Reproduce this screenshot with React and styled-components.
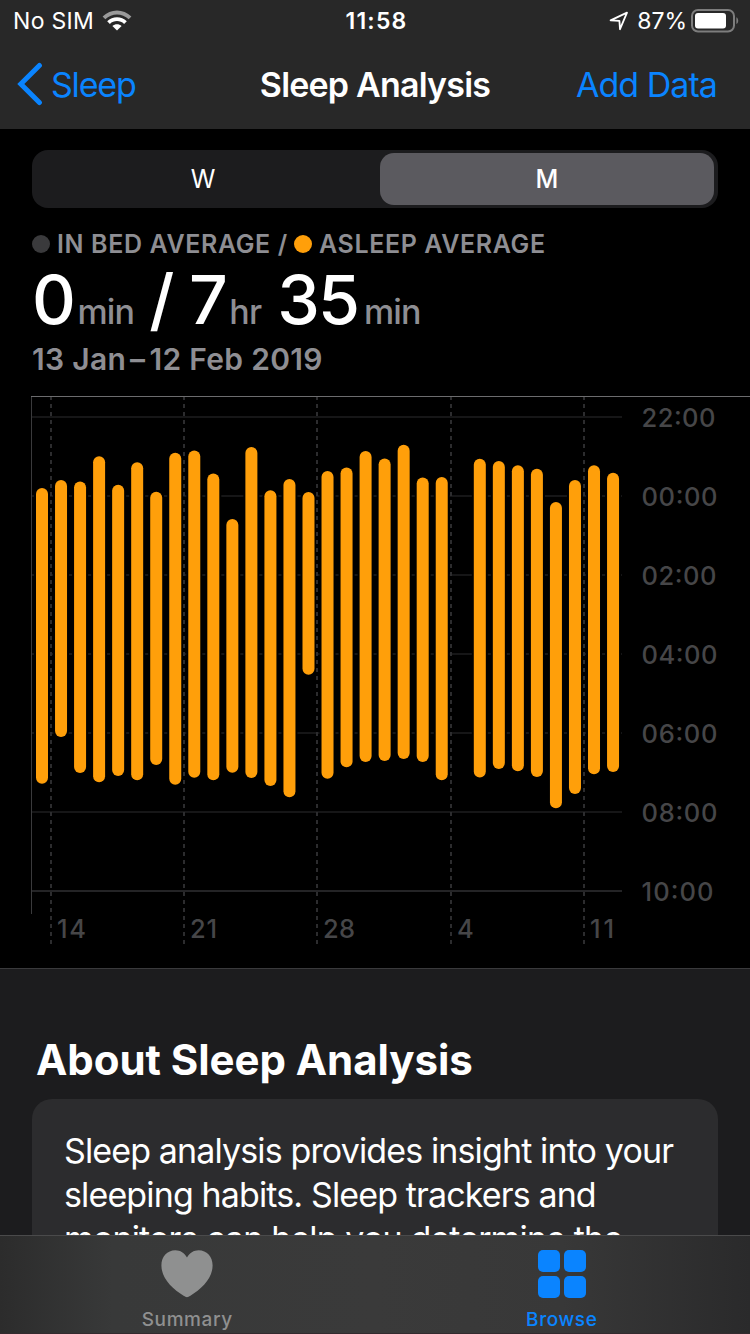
import React, { useState } from 'react'
import styled, { createGlobalStyle } from 'styled-components'

const nights = [
  [488, 783.7], [480, 737], [481.5, 773], [456.3, 782.3], [484.8, 776], [462.3, 780.3], [491.7, 765],
  [452.7, 784.7], [450.4, 777.7], [473.4, 780.3], [519, 772.7], [447, 778], [490.3, 786], [479, 797.3],
  [492, 674.7], [471, 778.7], [467.6, 767.3], [451, 762], [458.4, 761], [444.8, 759], [477.4, 762],
  [477, 780.3], null, [458.7, 777.4], [461, 769], [465.2, 771.2], [468.8, 777], [502, 808.2],
  [480, 794], [465.3, 774.2], [472.7, 772],
]

const hours = ['22:00', '00:00', '02:00', '04:00', '06:00', '08:00', '10:00']
const hourWidths = [74, 76, 75, 76, 76, 76, 72]

const days = [
  { label: '14', x: 51, width: 29 },
  { label: '21', x: 184, width: 27 },
  { label: '28', x: 317, width: 32 },
  { label: '4', x: 451, width: 16 },
  { label: '11', x: 584, width: 24 },
]

const SleepChart = () => (
  <Chart viewBox="0 396 750 552">
    {hours.map((hour, i) => (
      <g key={hour}>
        <line x1="32" x2="622" y1={417 + i * 79} y2={417 + i * 79} stroke={i === 6 ? '#242426' : '#161617'} strokeWidth="2" />
        <text x="641.5" y={426.7 + i * 79} textLength={hourWidths[i]}>{hour}</text>
      </g>
    ))}
    {nights.map((night, i) => night && (
      <rect
        key={i}
        x={34 + i * 19.035}
        y={night[0] - 2}
        width="16"
        height={night[1] - night[0] + 4}
        rx="8"
        fill="#000"
      />
    ))}
    {days.map((day) => (
      <g key={day.label}>
        <line x1={day.x} x2={day.x} y1="396" y2="944" stroke="#2c2c2e" strokeWidth="2" strokeDasharray="4 4" />
        <text x={day.x + 6} y="938" textLength={day.width}>{day.label}</text>
      </g>
    ))}
    {nights.map((night, i) => night && (
      <rect
        key={i}
        x={36 + i * 19.035}
        y={night[0]}
        width="12"
        height={night[1] - night[0]}
        rx="6"
        fill="#ff9f0a"
      />
    ))}
    <line x1="31.5" x2="31.5" y1="396" y2="914" stroke="#3a3a3c" />
    <line x1="31" x2="750" y1="396.5" y2="396.5" stroke="#6c6c6e" />
  </Chart>
)

const WifiIcon = () => (
  <svg width="30" height="23" viewBox="0 0 30 23">
    <path d="M0.6 7.6 C8.6 -0.4 21.4 -0.4 29.4 7.6 L26.7 10.3 C20.2 3.9 9.8 3.9 3.3 10.3 Z" fill="#9a9a9a" />
    <path d="M5.2 12.2 C10.6 6.9 19.4 6.9 24.8 12.2 L22.1 14.9 C18.2 11.1 11.8 11.1 7.9 14.9 Z" fill="#fff" />
    <path d="M10.4 17 C13 14.7 17 14.7 19.6 17 L15 21.6 Z" fill="#fff" />
  </svg>
)

const LocationIcon = () => (
  <svg width="20" height="20" viewBox="0 0 20 20">
    <path d="M1.6 9.4 L18 1.6 L11 18.2 L10.4 9.8 Z" fill="none" stroke="#fff" strokeWidth="1.8" strokeLinejoin="round" />
  </svg>
)

const BatteryIcon = () => (
  <svg width="49" height="24" viewBox="0 0 49 24">
    <rect x="1" y="1" width="42" height="21.5" rx="6" fill="none" stroke="#7d7d7d" strokeWidth="2" />
    <rect x="4" y="4" width="31" height="15.5" rx="3" fill="#fff" />
    <path d="M45.4 8.2 C47.8 9.3 47.8 14 45.4 15.1 Z" fill="#7d7d7d" />
  </svg>
)

const BackIcon = () => (
  <svg width="26" height="44" viewBox="0 0 26 44">
    <path d="M22.4 3.4 L3.8 22 L22.4 40.6" fill="none" stroke="#0a84ff" strokeWidth="5" strokeLinecap="round" strokeLinejoin="miter" />
  </svg>
)

const HeartIcon = () => (
  <svg width="52" height="48" viewBox="0 0 52 48">
    <path d="M26 7.6 C23.6 3 19.2 0.3 14.4 0.3 C6.2 0.3 0.4 6.8 0.4 15.4 C0.4 28.4 11.4 38.8 22.6 45.8 C24 46.7 25 47.2 26 47.2 C27 47.2 28 46.7 29.4 45.8 C40.6 38.8 51.6 28.4 51.6 15.4 C51.6 6.8 45.8 0.3 37.6 0.3 C32.8 0.3 28.4 3 26 7.6 Z" fill="#8f9090" />
  </svg>
)

const App = () => {
  const [range, setRange] = useState('M')

  return (
    <Screen>
      <GlobalStyle />
      <Header>
        <StatusBar>
          <Carrier>No SIM <WifiIcon /></Carrier>
          <Clock>11:58</Clock>
          <Power><LocationIcon /><Percent>87%</Percent><BatteryIcon /></Power>
        </StatusBar>
        <NavBar>
          <BackButton><BackIcon />Sleep</BackButton>
          <Title>Sleep Analysis</Title>
          <AddButton>Add Data</AddButton>
        </NavBar>
      </Header>

      <Content>
        <Segments>
          <Segment $active={range === 'W'} onClick={() => setRange('W')}>W</Segment>
          <Segment $active={range === 'M'} onClick={() => setRange('M')}>M</Segment>
        </Segments>
        <Legend>
          <Dot $color="#3a3a3c" />
          <InBed>IN BED AVERAGE /</InBed>
          <Dot $color="#ff9f0a" />
          <Asleep>ASLEEP AVERAGE</Asleep>
        </Legend>
        <Averages>
          <Value>0</Value>
          <Unit>min</Unit>
          <Slash>/</Slash>
          <Value>7</Value>
          <Unit>hr</Unit>
          <Minutes>35</Minutes>
          <Unit>min</Unit>
        </Averages>
        <Period>13 Jan<Dash>–</Dash>12 Feb 2019</Period>
        <SleepChart />
        <About>
          <Heading>About Sleep Analysis</Heading>
          <Card>
            Sleep analysis provides insight into your<br />
            sleeping habits. Sleep trackers and<br />
            monitors can help you determine the
          </Card>
        </About>
      </Content>

      <TabBar>
        <Tab>
          <HeartIcon />
          <TabLabel>Summary</TabLabel>
        </Tab>
        <Tab $active>
          <Tiles><Tile /><Tile /><Tile /><Tile /></Tiles>
          <TabLabel>Browse</TabLabel>
        </Tab>
      </TabBar>
    </Screen>
  )
}

export default App

const GlobalStyle = createGlobalStyle`
  * {
    box-sizing: border-box;
  }
  body {
    margin: 0;
    background: #000;
    font-family: Inter, "Liberation Sans", sans-serif;
    -webkit-font-smoothing: antialiased;
  }
  button {
    border: none;
    padding: 0;
    background: none;
    font: inherit;
    cursor: pointer;
  }
  svg {
    display: block;
    flex-shrink: 0;
  }
`;

const Screen = styled.div`
  display: flex;
  flex-direction: column;
  width: 750px;
  height: 1334px;
  overflow: hidden;
  color: #fff;
  background: #000;
`;

const Header = styled.header`
  height: 129px;
  flex-shrink: 0;
  background: #282828;
`;

const StatusBar = styled.div`
  display: grid;
  grid-template-columns: 1fr auto 1fr;
  align-items: center;
  height: 40px;
  padding: 1px 10px 0 13px;
  font-size: 23px;
  white-space: nowrap;
`;

const Carrier = styled.div`
  display: flex;
  align-items: center;
  gap: 8px;
  letter-spacing: 0.3px;
`;

const Clock = styled.div`
  font-weight: 600;
  letter-spacing: 1.2px;
`;

const Power = styled.div`
  display: flex;
  align-items: center;
  justify-content: flex-end;
`;

const Percent = styled.span`
  margin: 0 4px 0 8px;
`;

const NavBar = styled.nav`
  display: grid;
  grid-template-columns: 1fr auto 1fr;
  align-items: center;
  height: 88px;
  padding: 0 17px;
  font-size: 34px;
`;

const BackButton = styled.button`
  display: flex;
  align-items: center;
  gap: 8px;
  color: #0a84ff;
  letter-spacing: -1.2px;
`;

const Title = styled.h1`
  margin: 0;
  font-size: 34px;
  font-weight: 600;
  letter-spacing: -0.8px;
`;

const AddButton = styled.button`
  justify-self: end;
  margin-right: 16px;
  color: #0a84ff;
  letter-spacing: -0.95px;
`;

const Content = styled.main`
  flex: 1;
  min-height: 0;
  overflow: hidden;
`;

const Segments = styled.div`
  display: flex;
  gap: 10px;
  height: 58px;
  margin: 21px 32px 0;
  padding: 3px 4px;
  border-radius: 16px;
  background: #1c1c1e;
`;

const Segment = styled.button`
  flex: ${({ $active }) => ($active ? '0 0 334px' : '1')};
  border-radius: 14px;
  color: #fff;
  font-size: 25px;
  font-weight: ${({ $active }) => ($active ? 500 : 400)};
  background: ${({ $active }) => ($active ? '#5b5a5f' : 'transparent')};
`;

const Legend = styled.div`
  display: flex;
  align-items: center;
  height: 30px;
  margin: 21px 32px 0;
  color: #8e8e93;
  font-size: 25px;
  font-weight: 600;
  letter-spacing: 0.62px;
  white-space: nowrap;
`;

const Dot = styled.span`
  width: 18px;
  height: 18px;
  border-radius: 50%;
  background: ${({ $color }) => $color};
`;

const InBed = styled.span`
  width: 237px;
  padding-left: 7px;
  margin-right: 7px;
`;

const Asleep = styled.span`
  padding-left: 7px;
`;

const Averages = styled.div`
  display: flex;
  align-items: baseline;
  height: 76px;
  line-height: 80px;
  margin: 0 32px;
  white-space: nowrap;
`;

const Value = styled.span`
  font-size: 68px;
  font-weight: 500;
  letter-spacing: -2.5px;
`;

const Slash = styled(Value)`
  margin: 0 17px 0 15px;
`;

const Minutes = styled(Value)`
  margin: 0 2px 0 16px;
  letter-spacing: -2px;
`;

const Unit = styled.span`
  margin-left: 4px;
  color: #8e8e93;
  font-size: 34px;
  font-weight: 500;
  letter-spacing: -0.8px;
`;

const Period = styled.div`
  height: 36px;
  margin: 6px 32px 19px;
  color: #8e8e93;
  font-size: 30px;
  font-weight: 600;
  line-height: 36px;
  letter-spacing: 0.3px;
`;

const Dash = styled.span`
  margin: 0 4px;
`;

const Chart = styled.svg`
  width: 750px;
  height: 552px;
  text {
    fill: #464648;
    font-size: 25.5px;
    font-weight: 500;
  }
`;

const About = styled.section`
  height: 400px;
  margin-top: 20px;
  padding: 66px 32px 0;
  border-top: 1px solid #3a3a3c;
  background: #1c1c1e;
`;

const Heading = styled.h2`
  height: 64px;
  margin: 0;
  padding-left: 4px;
  font-size: 42px;
  font-weight: 700;
  line-height: 50px;
  letter-spacing: -0.05px;
`;

const Card = styled.div`
  height: 270px;
  padding: 30px 32px;
  border-radius: 20px;
  background: #2c2c2e;
  font-size: 34px;
  line-height: 44px;
  letter-spacing: -0.87px;
  white-space: nowrap;
`;

const TabBar = styled.footer`
  display: flex;
  height: 99px;
  flex-shrink: 0;
  padding-right: 1px;
  border-top: 1px solid #4a4a4b;
  border-bottom: 1px solid #332a2e;
  background: linear-gradient(90deg, #2c2c2c 0, #383939 15%, #3a3a3a 50%, #383838 75%, #2a2a2b 100%);
`;

const Tab = styled.button`
  display: flex;
  flex: 1;
  flex-direction: column;
  align-items: center;
  padding-top: 14px;
  color: ${({ $active }) => ($active ? '#0a84ff' : '#8f9090')};
`;

const Tiles = styled.div`
  display: grid;
  grid-template-columns: 22px 22px;
  grid-auto-rows: 22px;
  gap: 4px;
`;

const Tile = styled.span`
  border-radius: 5px;
  background: #0a84ff;
`;

const TabLabel = styled.span`
  margin-top: 10px;
  font-size: 19px;
  font-weight: 500;
  line-height: 24px;
  letter-spacing: 0.6px;
`;
